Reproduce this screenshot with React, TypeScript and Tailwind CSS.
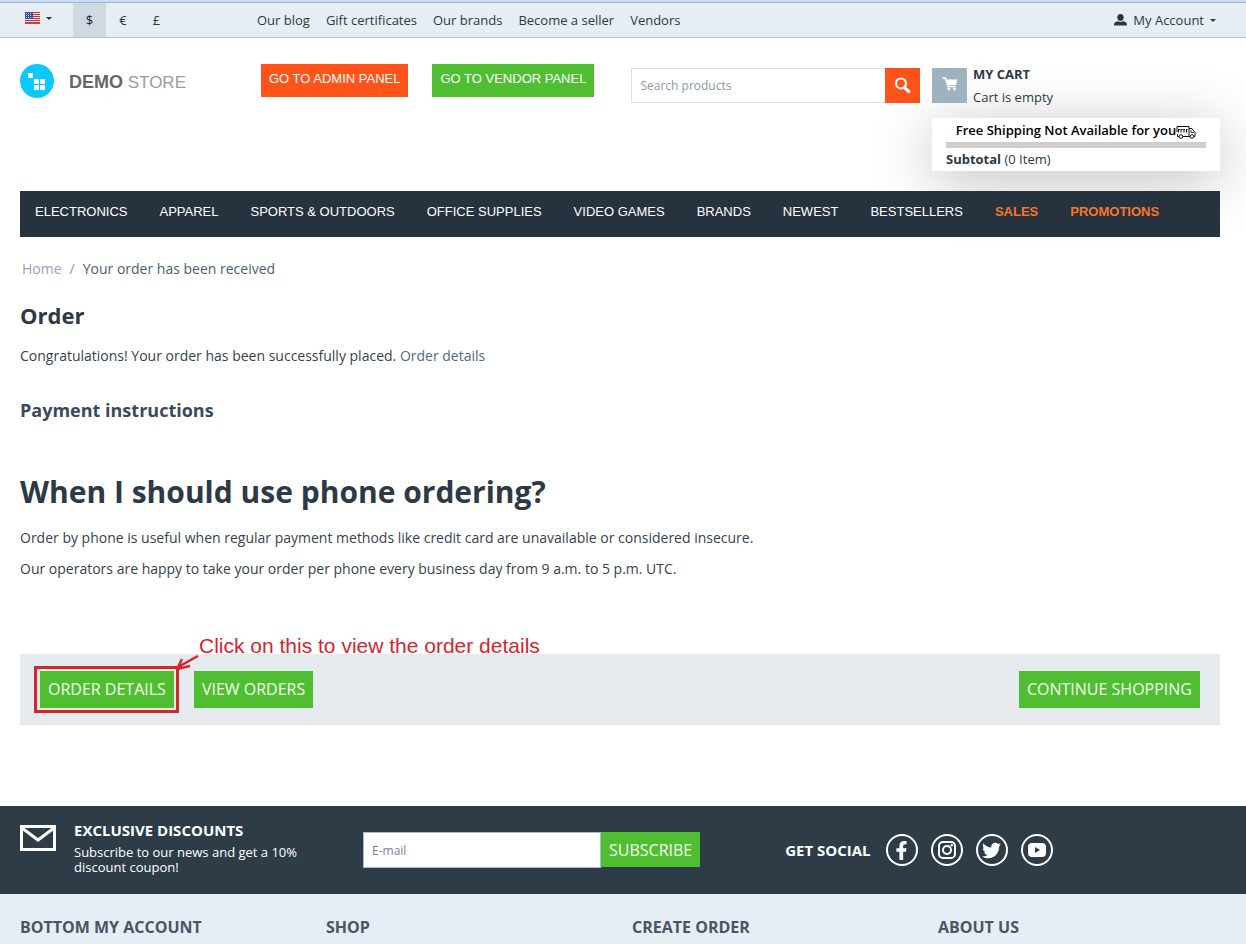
import { FaFacebookF, FaTwitter } from "react-icons/fa";

const topLinks = ["Our blog", "Gift certificates", "Our brands", "Become a seller", "Vendors"];

const menu = [
  "Electronics",
  "Apparel",
  "Sports & Outdoors",
  "Office supplies",
  "Video games",
  "Brands",
  "Newest",
  "Bestsellers",
];

const promoMenu = ["Sales", "Promotions"];

const footerColumns = ["Bottom My Account", "Shop", "Create order", "About us"];

const socials = [
  { name: "Facebook", icon: <FaFacebookF className="size-[19px]" /> },
  { name: "Instagram", icon: <InstagramIcon /> },
  { name: "Twitter", icon: <FaTwitter className="size-[19px]" /> },
  { name: "YouTube", icon: <YoutubeIcon /> },
];

function InstagramIcon() {
  return (
    <svg width="18" height="18" viewBox="0 0 18 18" fill="none" stroke="#fff" strokeWidth="2" aria-hidden="true">
      <rect x="1" y="1" width="16" height="16" rx="4" />
      <circle cx="9" cy="9" r="4" />
      <circle cx="13.700" cy="4.300" r="1.200" fill="#fff" stroke="none" />
    </svg>
  );
}

function YoutubeIcon() {
  return (
    <svg width="18" height="14" viewBox="0 0 18 14" aria-hidden="true">
      <rect width="18" height="14" rx="4" fill="#fff" />
      <path d="M7 4l5 3-5 3z" fill="#2e3c48" />
    </svg>
  );
}

function Flag() {
  return (
    <svg width="15" height="12" viewBox="0 0 15 12" aria-hidden="true">
      <rect width="15" height="12" fill="#f3e4e6" />
      {[0, 2, 4, 6, 8, 10].map((y) => (
        <rect key={y} y={y} width="15" height="1" fill="#c4313f" />
      ))}
      <rect y="11" width="15" height="1" fill="#a5525c" />
      <rect width="8" height="7" fill="#4650a0" />
      {[1, 3, 5].map((y) =>
        [1, 3, 5].map((x) => (
          <rect key={`${x}-${y}`} x={x} y={y} width="1" height="1" fill="#b9bfe6" />
        ))
      )}
    </svg>
  );
}

function Caret() {
  return (
    <svg width="6" height="3" viewBox="0 0 6 3" aria-hidden="true">
      <path d="M0 0h6L3 3z" fill="#2b3643" />
    </svg>
  );
}

function TopBar() {
  return (
    <div className="h-[38px] border-t-2 border-b border-t-[#cbdcf4] border-b-[#adc5d8] bg-[#e6eef4] text-[13px] leading-5 text-[#2b3a46]">
      <div className="flex h-full items-stretch border-t border-[#9fb4d3] pl-5 pr-[30px]">
        <button className="flex w-[53px] items-center gap-[6px] pl-[5px] pb-1" aria-label="Language">
          <Flag />
          <Caret />
        </button>
        <button className="w-[33px] bg-[#cfd9e2] text-[#17212b]">$</button>
        <button className="w-[34px]">€</button>
        <button className="w-[33px]">£</button>
        <nav className="ml-[84px] flex items-center gap-4">
          {topLinks.map((link) => (
            <a key={link} href="#">
              {link}
            </a>
          ))}
        </nav>
        <button className="ml-auto flex items-center gap-[6px]">
          <svg width="13" height="12" viewBox="0 0 13 12" fill="#2b3643" aria-hidden="true">
            <path d="M6.500 0C8.500 0 9.700 1.400 9.700 3.400S8.300 7 6.500 7 3.300 5.400 3.300 3.400 4.500 0 6.500 0z" />
            <path d="M0 11.500c0-2.600.6-3.400 3.900-4.300 1.500 1 3.700 1 5.200 0 3.300.9 3.900 1.700 3.900 4.300z" />
          </svg>
          My Account
          <Caret />
        </button>
      </div>
    </div>
  );
}

function Logo() {
  return (
    <a href="#" className="flex w-[241px] shrink-0 items-center gap-[15px]">
      <svg width="34" height="34" viewBox="0 0 34 34" aria-hidden="true">
        <circle cx="17" cy="17" r="17" fill="#0cc8fc" />
        <g fill="#fff">
          <path d="M8 9h5v5H8z" />
          <path d="M14 15h5v5h-5zM20 15h5v5h-5zM14 21h5v5h-5zM20 21h5v5h-5z" opacity=".93" />
        </g>
      </svg>
      <span className="pt-[2px] font-[Liberation_Sans,Arial,sans-serif] text-[17px] text-[#9b9b9b]">
        <b className="text-[18px] text-[#666]">DEMO</b> STORE
      </span>
    </a>
  );
}

function Truck() {
  return (
    <svg className="mt-[5px]" width="20" height="14" viewBox="0 0 20 14" fill="none" stroke="#111" aria-hidden="true">
      <path d="M3 11.500H1.500V9M1 7V1.500h12v10H7M13 3.500h3l3 4v4h-1M14 11.500h-1" />
      <path d="M15 5v2.500h3" strokeWidth=".8" />
      <circle cx="5" cy="11.500" r="1.800" />
      <circle cx="16" cy="11.500" r="1.800" />
      <path d="M2.500 4v3.500M2 4.500h2M5 4v3.500M5 4.500h1.500M8 4v3.500M7.500 4.500h1.500M10.500 4v3.500M10 4.500h1.500" />
    </svg>
  );
}

function Cart() {
  return (
    <div className="ml-3 w-[288px] shrink-0 pt-1 text-[13px]">
      <a href="#" className="flex h-[35px] gap-[6px]">
        <span className="flex size-[35px] items-center justify-center bg-[#9fb2c0] pb-1">
          <svg width="16" height="14" viewBox="0 0 16 14" aria-hidden="true">
            <path d="M.5 1h2.700L6 9.500h7.500" fill="none" stroke="#fff" strokeWidth="1.500" />
            <path d="M4 2.500h11.500L14 8H6z" fill="#fff" />
            <circle cx="6.800" cy="12" r="1.400" fill="#fff" />
            <circle cx="12.500" cy="12" r="1.400" fill="#fff" />
          </svg>
        </span>
        <span className="-mt-1 text-[#2b3a46]">
          <b className="block leading-5">MY CART</b>
          <span className="block leading-[26px]">Cart is empty</span>
        </span>
      </a>
      <div className="mt-[15px] h-[53px] bg-white px-[14px] pt-[2px] text-[#2b3a46] shadow-[0_10px_60px_rgba(0,0,0,0.26)]">
        <p className="flex h-[22px] justify-center font-semibold leading-5 text-black">
          Free Shipping Not Available for you
          <Truck />
        </p>
        <div className="h-[6px] bg-[#d0cdcd]" />
        <p className="leading-[22px]">
          <b>Subtotal</b> (0 Item)
        </p>
      </div>
    </div>
  );
}

function Header() {
  return (
    <header className="flex items-start pl-5 pr-[26px] pt-[26px] pb-5">
      <Logo />
      <div className="flex shrink-0 gap-6 font-[Liberation_Sans,Arial,sans-serif] text-[13px] text-white">
        <a href="#" className="bg-[#ff5319] px-2 pt-[5px] pb-2 leading-5">
          GO TO ADMIN PANEL
        </a>
        <a href="#" className="bg-[#50be31] px-2 pt-[5px] pb-2 leading-5">
          GO TO VENDOR PANEL
        </a>
      </div>
      <form className="ml-[37px] mt-1 flex h-[35px] min-w-0 flex-1">
        <input
          type="text"
          aria-label="Search products"
          placeholder="Search products"
          className="min-w-0 flex-1 border border-r-0 border-[#dcdfe2] px-2 text-[12px] placeholder:text-[#8c99ab]"
        />
        <button type="button" aria-label="Search" className="flex w-[35px] items-center justify-center bg-[#ff5319]">
          <svg width="17" height="17" viewBox="0 0 17 17" fill="none" stroke="#fff" aria-hidden="true">
            <circle cx="7" cy="6.500" r="5" strokeWidth="2.200" />
            <path d="M10.500 10.500l4.300 4" strokeWidth="3.200" strokeLinecap="round" />
          </svg>
        </button>
      </form>
      <Cart />
    </header>
  );
}

function MainMenu() {
  return (
    <nav className="relative flex gap-8 bg-[#26323e] px-[15px] pt-[11px] pb-[15px] font-[Liberation_Sans,Arial,sans-serif] text-[13px] uppercase leading-5 text-white">
      {menu.map((item) => (
        <a key={item} href="#" className="whitespace-nowrap">
          {item}
        </a>
      ))}
      {promoMenu.map((item) => (
        <a key={item} href="#" className="font-bold text-[#f5772a]">
          {item}
        </a>
      ))}
    </nav>
  );
}

function OrderActions() {
  return (
    <div className="mt-[75px] flex items-center gap-5 bg-[#e5eaee] px-5 py-[17px] text-[16px] text-[#f4fff0]">
      <div className="relative">
        <a href="#" className="block bg-[#50be31] px-2 pt-[6px] pb-[7px] leading-6">
          ORDER DETAILS
        </a>
        {/* Callout pointing at the button */}
        <div className="pointer-events-none absolute -left-[6px] -right-[5px] -inset-y-[5px] border-[3px] border-[#cf2832] outline-2 -outline-offset-5 outline-[#f6e9e4]" />
        <svg className="pointer-events-none absolute -top-4 left-[134px]" width="26" height="18" viewBox="0 0 26 18" fill="none" stroke="#dc2430" strokeWidth="2.500" aria-hidden="true">
          <path d="M24 1L4 12M8 4L3 14M3 14l13-3" />
          <path d="M2 15l4-5 3 3z" fill="#dc2430" strokeWidth="1" />
        </svg>
        <p className="pointer-events-none absolute -top-[38px] left-[159px] whitespace-nowrap font-[Liberation_Sans,Arial,sans-serif] text-[21px] leading-[26px] text-[#d8242e]">
          Click on this to view the order details
        </p>
      </div>
      <a href="#" className="bg-[#50be31] px-2 pt-[6px] pb-[7px] leading-6">
        VIEW ORDERS
      </a>
      <a href="#" className="ml-auto bg-[#50be31] px-2 pt-[6px] pb-[7px] leading-6">
        CONTINUE SHOPPING
      </a>
    </div>
  );
}

function Newsletter() {
  return (
    <section className="mt-[81px] flex h-[88px] items-start bg-[#2e3c48] pl-5 pr-[26px] text-white">
      <svg className="mt-[19px] shrink-0" width="36" height="26" viewBox="0 0 36 26" fill="none" stroke="#fff" strokeWidth="3" aria-hidden="true">
        <path d="M1.500 1.500h33v23h-33z" />
        <path d="M2 3l16 12L34 3" />
      </svg>
      <div className="ml-[18px] w-[289px] pt-3">
        <h3 className="text-[15px] font-bold leading-6">EXCLUSIVE DISCOUNTS</h3>
        <p className="w-[240px] pt-[3px] text-[13px] leading-[15px]">
          Subscribe to our news and get a 10% discount coupon!
        </p>
      </div>
      <form className="mt-[26px] flex">
        <input
          type="email"
          aria-label="E-mail"
          placeholder="E-mail"
          className="h-9 w-[238px] border border-[#a9bbc8] bg-white px-2 text-[12px] placeholder:text-[#7b7f86]"
        />
        <button type="button" className="h-[35px] bg-[#50be31] px-2 text-[16px] text-[#f4fff0]">
          SUBSCRIBE
        </button>
      </form>
      <div className="ml-[85px] mt-7 flex items-center gap-[13px]">
        <h3 className="mr-[2px] text-[15px] font-bold leading-8">GET SOCIAL</h3>
        {socials.map((social) => (
          <a
            key={social.name}
            href="#"
            aria-label={social.name}
            className="flex size-8 items-center justify-center rounded-full border-2 border-white"
          >
            {social.icon}
          </a>
        ))}
      </div>
    </section>
  );
}

export default function App() {
  return (
    <div className="flex min-h-screen flex-col overflow-x-hidden bg-white font-[Open_Sans,sans-serif]">
      <TopBar />
      <Header />
      <main className="pl-5 pr-[26px] text-[14px] leading-5 text-[#36424d]">
        <MainMenu />

        <div className="mt-[22px] flex gap-2 pl-[2px] text-[#4c5f6d]">
          <a href="#" className="text-[#97a3b3]">
            Home
          </a>
          <span className="text-[#8b98a5]">/</span>
          <span>Your order has been received</span>
        </div>

        <h1 className="mt-[21px] text-[22px] font-bold leading-[30px] text-[#2d3a45]">Order</h1>
        <p className="mt-4">
          Congratulations! Your order has been successfully placed.{" "}
          <a href="#" className="text-[#536b7c]">
            Order details
          </a>
        </p>

        <h2 className="mt-8 text-[18px] font-bold leading-6 text-[#3a4a5c]">Payment instructions</h2>
        <h1 className="mt-[50px] text-[30px] font-bold leading-10 text-[#2d3a45]">
          When I should use phone ordering?
        </h1>
        <p className="mt-4">
          Order by phone is useful when regular payment methods like credit card are unavailable or considered insecure.
        </p>
        <p className="mt-[11px]">
          Our operators are happy to take your order per phone every business day from 9 a.m. to 5 p.m. UTC.
        </p>

        <OrderActions />
      </main>

      <Newsletter />
      <footer className="grid flex-1 grid-cols-4 gap-6 bg-[#e5eef4] pl-5 pr-[26px] pt-[21px]">
        {footerColumns.map((title) => (
          <h2 key={title} className="text-[16px] font-bold uppercase leading-6 text-[#4b5563]">
            {title}
          </h2>
        ))}
      </footer>
    </div>
  );
}
